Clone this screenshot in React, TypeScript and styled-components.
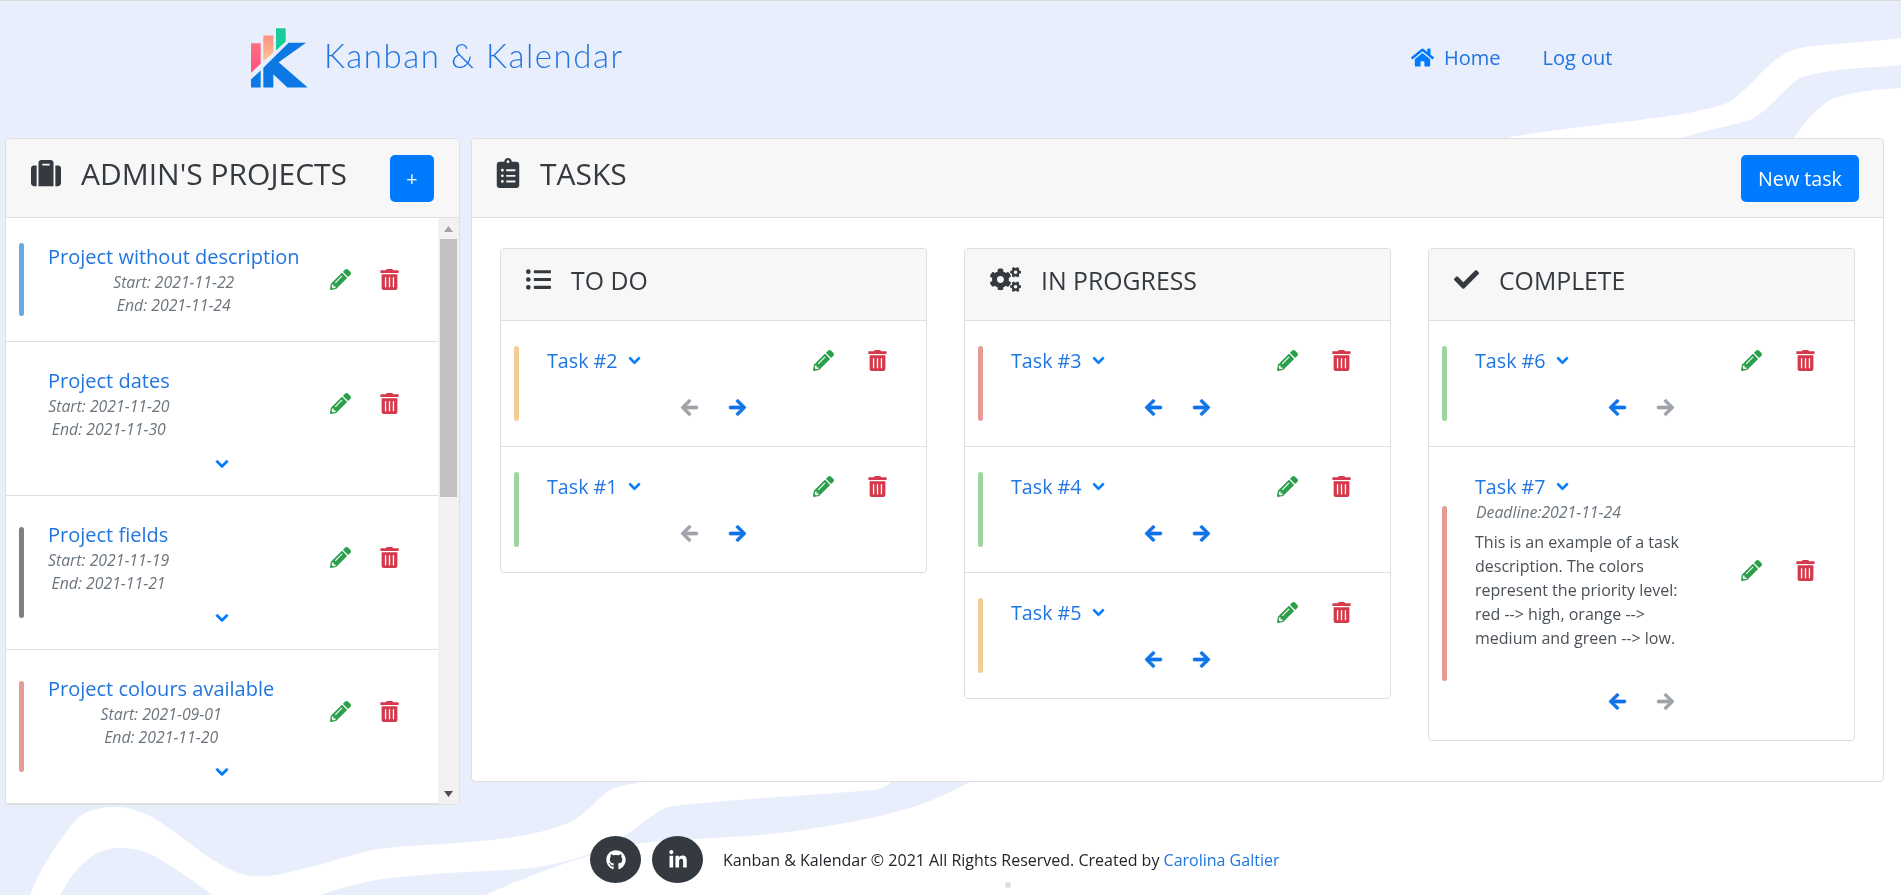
import React from "react";
import styled, { createGlobalStyle } from "styled-components";
import {
  FaHome, FaSuitcase, FaClipboardList, FaListUl, FaCogs, FaCheck, FaChevronDown,
  FaArrowLeft, FaArrowRight, FaGithub, FaLinkedinIn, FaPencilAlt, FaTrashAlt,
} from "react-icons/fa";

const BLUE = "#007bff";
const LINK = "#2175e0";
const INK = "#343a40";
const LINE = "#dfdfdf";
const HEAD = "#f7f7f7";

const Global = createGlobalStyle`
  html { background: #fff; }
  body { margin: 0; font-family: "Open Sans", "Liberation Sans", sans-serif; color: #212529; overflow: hidden; }
  * { box-sizing: border-box; }
`;

const Backdrop = styled.svg`
  position: fixed;
  left: 0;
  top: 0;
  z-index: -1;
`;

const Page = styled.div`
  height: 895px;
  display: flex;
  flex-direction: column;
  border-top: 1px solid #dcdcdc;
`;

const Nav = styled.header`
  height: 137px;
  flex: none;
  display: flex;
  align-items: flex-start;
  padding: 26px 0 0 250px;
`;

const Brand = styled.div`
  display: flex;
  align-items: flex-start;
  width: 1161px;
  flex: none;
`;

const BrandName = styled.span`
  font-family: "Lato", "Open Sans", sans-serif;
  font-weight: 300;
  font-size: 33px;
  letter-spacing: 1.55px;
  line-height: 40px;
  color: ${LINK};
  margin: 8px 0 0 14px;
`;

const NavLinks = styled.nav`
  display: flex;
  align-items: center;
  gap: 42px;
  height: 60px;
`;

const NavLink = styled.a`
  display: flex;
  align-items: center;
  gap: 10px;
  font-size: 20px;
  color: ${LINK};
  svg { font-size: 23px; color: ${BLUE}; }
`;

const Main = styled.main`
  flex: none;
  display: flex;
  align-items: flex-start;
  gap: 11px;
  padding: 0 17px 0 5px;
`;

const Card = styled.section<{ $width: number; $height?: number }>`
  width: ${(p) => p.$width}px;
  ${(p) => (p.$height ? `height: ${p.$height}px;` : "")}
  flex: none;
  display: flex;
  flex-direction: column;
  background: #fff;
  border: 1px solid ${LINE};
  border-radius: 4px;
  overflow: hidden;
`;

const CardHeader = styled.div`
  height: 79px;
  flex: none;
  display: flex;
  align-items: flex-start;
  justify-content: space-between;
  background: ${HEAD};
  border-bottom: 1px solid ${LINE};
`;

const CardTitle = styled.h3<{ $inset: number; $gap: number }>`
  display: flex;
  align-items: center;
  gap: ${(p) => p.$gap}px;
  margin: 13px 0 0 ${(p) => p.$inset}px;
  height: 42px;
  font-size: 30px;
  font-weight: 400;
  color: ${INK};
  svg { font-size: 30px; flex: none; }
`;

const PrimaryButton = styled.button<{ $width: number; $right: number }>`
  width: ${(p) => p.$width}px;
  height: 47px;
  margin: 16px ${(p) => p.$right}px 0 0;
  border: 0;
  border-radius: 5px;
  background: ${BLUE};
  color: #fff;
  font-family: inherit;
  font-size: 19.7px;
`;

const ListFrame = styled.div`
  flex: 1;
  min-height: 0;
  display: flex;
`;

const ProjectList = styled.div`
  flex: 1;
  min-width: 0;
  overflow: hidden;
`;

const Rail = styled.div`
  flex: 0 0 21px;
  display: flex;
  flex-direction: column;
  background: #f1f1f1;
`;

const RailButton = styled.div`
  flex: 0 0 21px;
  display: flex;
  align-items: center;
  justify-content: center;
`;

const RailGutter = styled.div`
  flex: 1;
  padding: 0 2px;
`;

const RailThumb = styled.div`
  height: 258px;
  background: #c1c1c1;
`;

const Item = styled.article`
  position: relative;
  border-bottom: 1px solid ${LINE};
`;

const ProjectItem = styled(Item)`
  padding: 24px 0;
`;

const TaskItem = styled(Item)`
  padding: 25px 0 24px;
  &:last-child { border-bottom: 0; }
`;

const Accent = styled.span<{ $color: string; $left: number }>`
  position: absolute;
  left: ${(p) => p.$left}px;
  top: 20%;
  height: 60%;
  width: 5px;
  border-radius: 3px;
  background: ${(p) => p.$color};
`;

const Row = styled.div<{ $inset: number; $right: number }>`
  display: flex;
  align-items: center;
  justify-content: space-between;
  padding: 0 ${(p) => p.$right}px 0 ${(p) => p.$inset}px;
`;

const ProjectBlock = styled.div`
  display: inline-flex;
  flex-direction: column;
  align-items: center;
  text-align: center;
`;

const ProjectName = styled.a`
  font-size: 20px;
  line-height: 29px;
  color: ${LINK};
  align-self: flex-start;
`;

const DateLine = styled.span`
  font-size: 15.8px;
  line-height: 23px;
  font-style: italic;
  color: #6c757d;
`;

const Actions = styled.div<{ $step: number }>`
  display: flex;
  flex: none;
  & > * { width: ${(p) => p.$step}px; }
`;

const IconButton = styled.span<{ $color: string }>`
  display: flex;
  justify-content: center;
  align-items: center;
  color: ${(p) => p.$color};
  font-size: 21px;
`;

const Expand = styled.div`
  display: flex;
  justify-content: center;
  align-items: center;
  height: 28px;
  margin: 9px 0 -7px;
  color: ${BLUE};
  font-size: 14px;
  svg { stroke: currentColor; stroke-width: 30; }
`;

const Board = styled.div`
  padding: 30px 28px 40px;
  display: grid;
  grid-template-columns: repeat(3, 427px);
  column-gap: 37px;
  align-items: start;
`;

const Column = styled.div`
  border: 1px solid ${LINE};
  border-radius: 4px;
  overflow: hidden;
`;

const ColumnHeader = styled.div`
  height: 72px;
  display: flex;
  align-items: center;
  gap: 20px;
  padding: 0 0 10px 25px;
  background: ${HEAD};
  border-bottom: 1px solid ${LINE};
  svg { font-size: 25px; color: ${INK}; flex: none; }
`;

const ColumnTitle = styled.h4`
  margin: 0;
  font-size: 24.8px;
  font-weight: 400;
  color: ${INK};
`;

const TaskBlock = styled.div`
  flex: 0 0 212px;
`;

const TaskName = styled.a`
  display: flex;
  align-items: center;
  gap: 10px;
  height: 29px;
  font-size: 19.7px;
  color: ${LINK};
  svg { font-size: 13px; color: ${BLUE}; stroke: currentColor; stroke-width: 30; }
`;

const Deadline = styled.div`
  font-size: 15.8px;
  line-height: 23px;
  font-style: italic;
  color: #6c757d;
  padding-left: 1px;
`;

const Description = styled.p`
  margin: 6px 0 19px;
  font-size: 16px;
  line-height: 24px;
  color: #495057;
`;

const Moves = styled.div`
  display: flex;
  justify-content: center;
  align-items: center;
  gap: 29px;
  height: 30px;
  margin-top: 17px;
`;

const Move = styled.span<{ $off?: boolean }>`
  display: flex;
  font-size: 19px;
  color: ${(p) => (p.$off ? "#9ea3a9" : "#0f74e8")};
  svg { stroke: currentColor; stroke-width: 20; }
`;

const Footer = styled.footer`
  flex: none;
  display: flex;
  align-items: center;
  padding: 31px 0 0 590px;
`;

const Social = styled.a`
  width: 51px;
  height: 47px;
  margin-right: 11px;
  border-radius: 50%;
  background: ${INK};
  color: #fff;
  display: flex;
  align-items: center;
  justify-content: center;
  font-size: 20px;
`;

const FooterText = styled.p`
  margin: 0 0 0 9px;
  font-size: 16px;
  color: #212529;
`;

const FooterLink = styled.a`
  color: ${LINK};
`;

type Project = { name: string; start: string; end: string; color?: string; more?: boolean };
const projects: Project[] = [
  { name: "Project without description", start: "2021-11-22", end: "2021-11-24", color: "#6aa9e3" },
  { name: "Project dates", start: "2021-11-20", end: "2021-11-30", more: true },
  { name: "Project fields", start: "2021-11-19", end: "2021-11-21", color: "#808080", more: true },
  { name: "Project colours available", start: "2021-09-01", end: "2021-11-20", color: "#e59a96", more: true },
];

const ORANGE = "#f3cd94";
const RED = "#e59a96";
const GREEN = "#9fd49f";

type Task = { name: string; color: string; back?: boolean; forward?: boolean; detail?: boolean };
const columns: { title: string; icon: React.ReactNode; tasks: Task[] }[] = [
  {
    title: "TO DO",
    icon: <FaListUl />,
    tasks: [
      { name: "Task #2", color: ORANGE, forward: true },
      { name: "Task #1", color: GREEN, forward: true },
    ],
  },
  {
    title: "IN PROGRESS",
    icon: <FaCogs size={31} />,
    tasks: [
      { name: "Task #3", color: RED, back: true, forward: true },
      { name: "Task #4", color: GREEN, back: true, forward: true },
      { name: "Task #5", color: ORANGE, back: true, forward: true },
    ],
  },
  {
    title: "COMPLETE",
    icon: <FaCheck />,
    tasks: [
      { name: "Task #6", color: GREEN, back: true },
      { name: "Task #7", color: RED, back: true, detail: true },
    ],
  },
];

const ItemActions = ({ step }: { step: number }) => (
  <Actions $step={step}>
    <IconButton $color="#2c9f4b"><FaPencilAlt /></IconButton>
    <IconButton $color="#d43a4b"><FaTrashAlt /></IconButton>
  </Actions>
);

const Logo = () => (
  <svg width="60" height="62" viewBox="60 50 180 185" aria-hidden="true">
    <defs>
      <linearGradient id="barA" x1="0" y1="0" x2="0" y2="1">
        <stop offset="0" stopColor="#ff6f7f" />
        <stop offset="1" stopColor="#ff4f80" />
      </linearGradient>
      <linearGradient id="barB" x1="0" y1="0" x2="0" y2="1">
        <stop offset="0" stopColor="#ff8f84" />
        <stop offset="1" stopColor="#ffc78a" />
      </linearGradient>
      <linearGradient id="barC" x1="0" y1="0" x2="0" y2="1">
        <stop offset="0" stopColor="#20c997" />
        <stop offset="1" stopColor="#0fd0a0" />
      </linearGradient>
    </defs>
    <path d="M63 98H92V160L63 187z" fill="url(#barA)" />
    <path d="M100 75H130V125L100 153z" fill="url(#barB)" />
    <path d="M138 53H167V93L138 120z" fill="url(#barC)" />
    <path d="M63 207L92 180V231H63z" fill="#0b78e3" />
    <path d="M100 172L176 97H228L146 155L233 231H172L130 191V231H100z" fill="#0b78e3" />
  </svg>
);

const Waves = () => (
  <Backdrop width="1901" height="895" viewBox="0 0 1901 895" aria-hidden="true">
    <path
      fill="#e8eefb"
      d="M0 0H1901V38C1860 43 1830 43 1800 48C1770 56 1760 78 1733 100C1700 118 1600 122 1510 137L1000 400L642 782C625 785 612 788 606 793C592 804 585 815 570 822C545 834 509 838 470 842C420 846 385 846 364 852C335 860 310 868 285 873C270 877 258 877 246 875C215 868 190 840 152 817C140 811 128 807 115 807C95 807 82 812 73 823C52 850 40 870 30 895H0Z"
    />
    <path fill="#e8eefb" d="M60 895C68 880 78 866 91 857C100 850 110 848 121 848C135 848 148 852 158 858C175 868 195 882 212 895Z" />
    <path
      fill="#e8eefb"
      d="M321 895C340 888 356 884 376 880C430 872 490 872 533 868C570 862 590 855 618 840C635 830 650 815 667 807C720 800 800 796 873 790C885 788 892 785 897 770H980C975 775 970 782 970 782C955 790 945 795 927 802C885 818 830 826 788 832C740 838 690 838 642 843C590 852 530 875 485 895Z"
    />
    <path
      fill="#e8eefb"
      d="M1667 145C1690 132 1725 128 1750 120C1770 110 1782 90 1800 78C1830 68 1870 68 1901 65V88C1870 90 1850 92 1830 100C1812 112 1802 125 1790 145Z"
    />
    <circle cx="1008" cy="885" r="3" fill="#d9dee8" />
  </Backdrop>
);

export default function App() {
  return (
    <>
      <Global />
      <Waves />
      <Page>
        <Nav>
          <Brand>
            <Logo />
            <BrandName>Kanban &amp; Kalendar</BrandName>
          </Brand>
          <NavLinks>
            <NavLink><FaHome />Home</NavLink>
            <NavLink>Log out</NavLink>
          </NavLinks>
        </Nav>
        <Main>
          <Card $width={455} $height={667}>
            <CardHeader>
              <CardTitle $inset={25} $gap={20}><FaSuitcase />ADMIN'S PROJECTS</CardTitle>
              <PrimaryButton $width={44} $right={25}>+</PrimaryButton>
            </CardHeader>
            <ListFrame>
              <ProjectList>
                {projects.map((p) => (
                  <ProjectItem key={p.name}>
                    {p.color && <Accent $color={p.color} $left={13} />}
                    <Row $inset={42} $right={24}>
                      <ProjectBlock>
                        <ProjectName>{p.name}</ProjectName>
                        <DateLine>Start: {p.start}</DateLine>
                        <DateLine>End: {p.end}</DateLine>
                      </ProjectBlock>
                      <ItemActions step={49} />
                    </Row>
                    {p.more && <Expand><FaChevronDown /></Expand>}
                  </ProjectItem>
                ))}
              </ProjectList>
              <Rail>
                <RailButton>
                  <svg width="9" height="6" viewBox="0 0 9 6"><path d="M4.5 0L9 6H0z" fill="#a3a3a3" /></svg>
                </RailButton>
                <RailGutter><RailThumb /></RailGutter>
                <RailButton>
                  <svg width="9" height="6" viewBox="0 0 9 6"><path d="M4.5 6L9 0H0z" fill="#505050" /></svg>
                </RailButton>
              </Rail>
            </ListFrame>
          </Card>
          <Card $width={1413}>
            <CardHeader>
              <CardTitle $inset={21} $gap={17}><FaClipboardList />TASKS</CardTitle>
              <PrimaryButton $width={118} $right={24}>New task</PrimaryButton>
            </CardHeader>
            <Board>
              {columns.map((c) => (
                <Column key={c.title}>
                  <ColumnHeader>
                    {c.icon}
                    <ColumnTitle>{c.title}</ColumnTitle>
                  </ColumnHeader>
                  {c.tasks.map((t) => (
                    <TaskItem key={t.name}>
                      <Accent $color={t.color} $left={13} />
                      <Row $inset={46} $right={22}>
                        <TaskBlock>
                          <TaskName>{t.name}<FaChevronDown /></TaskName>
                          {t.detail && (
                            <>
                              <Deadline>Deadline:2021-11-24</Deadline>
                              <Description>
                                This is an example of a task description. The colors represent the
                                priority level: red --&gt; high, orange --&gt; medium and green --&gt; low.
                              </Description>
                            </>
                          )}
                        </TaskBlock>
                        <ItemActions step={54} />
                      </Row>
                      <Moves>
                        <Move $off={!t.back}><FaArrowLeft /></Move>
                        <Move $off={!t.forward}><FaArrowRight /></Move>
                      </Moves>
                    </TaskItem>
                  ))}
                </Column>
              ))}
            </Board>
          </Card>
        </Main>
        <Footer>
          <Social><FaGithub /></Social>
          <Social><FaLinkedinIn /></Social>
          <FooterText>
            Kanban &amp; Kalendar © 2021 All Rights Reserved. Created by <FooterLink>Carolina Galtier</FooterLink>
          </FooterText>
        </Footer>
      </Page>
    </>
  );
}
